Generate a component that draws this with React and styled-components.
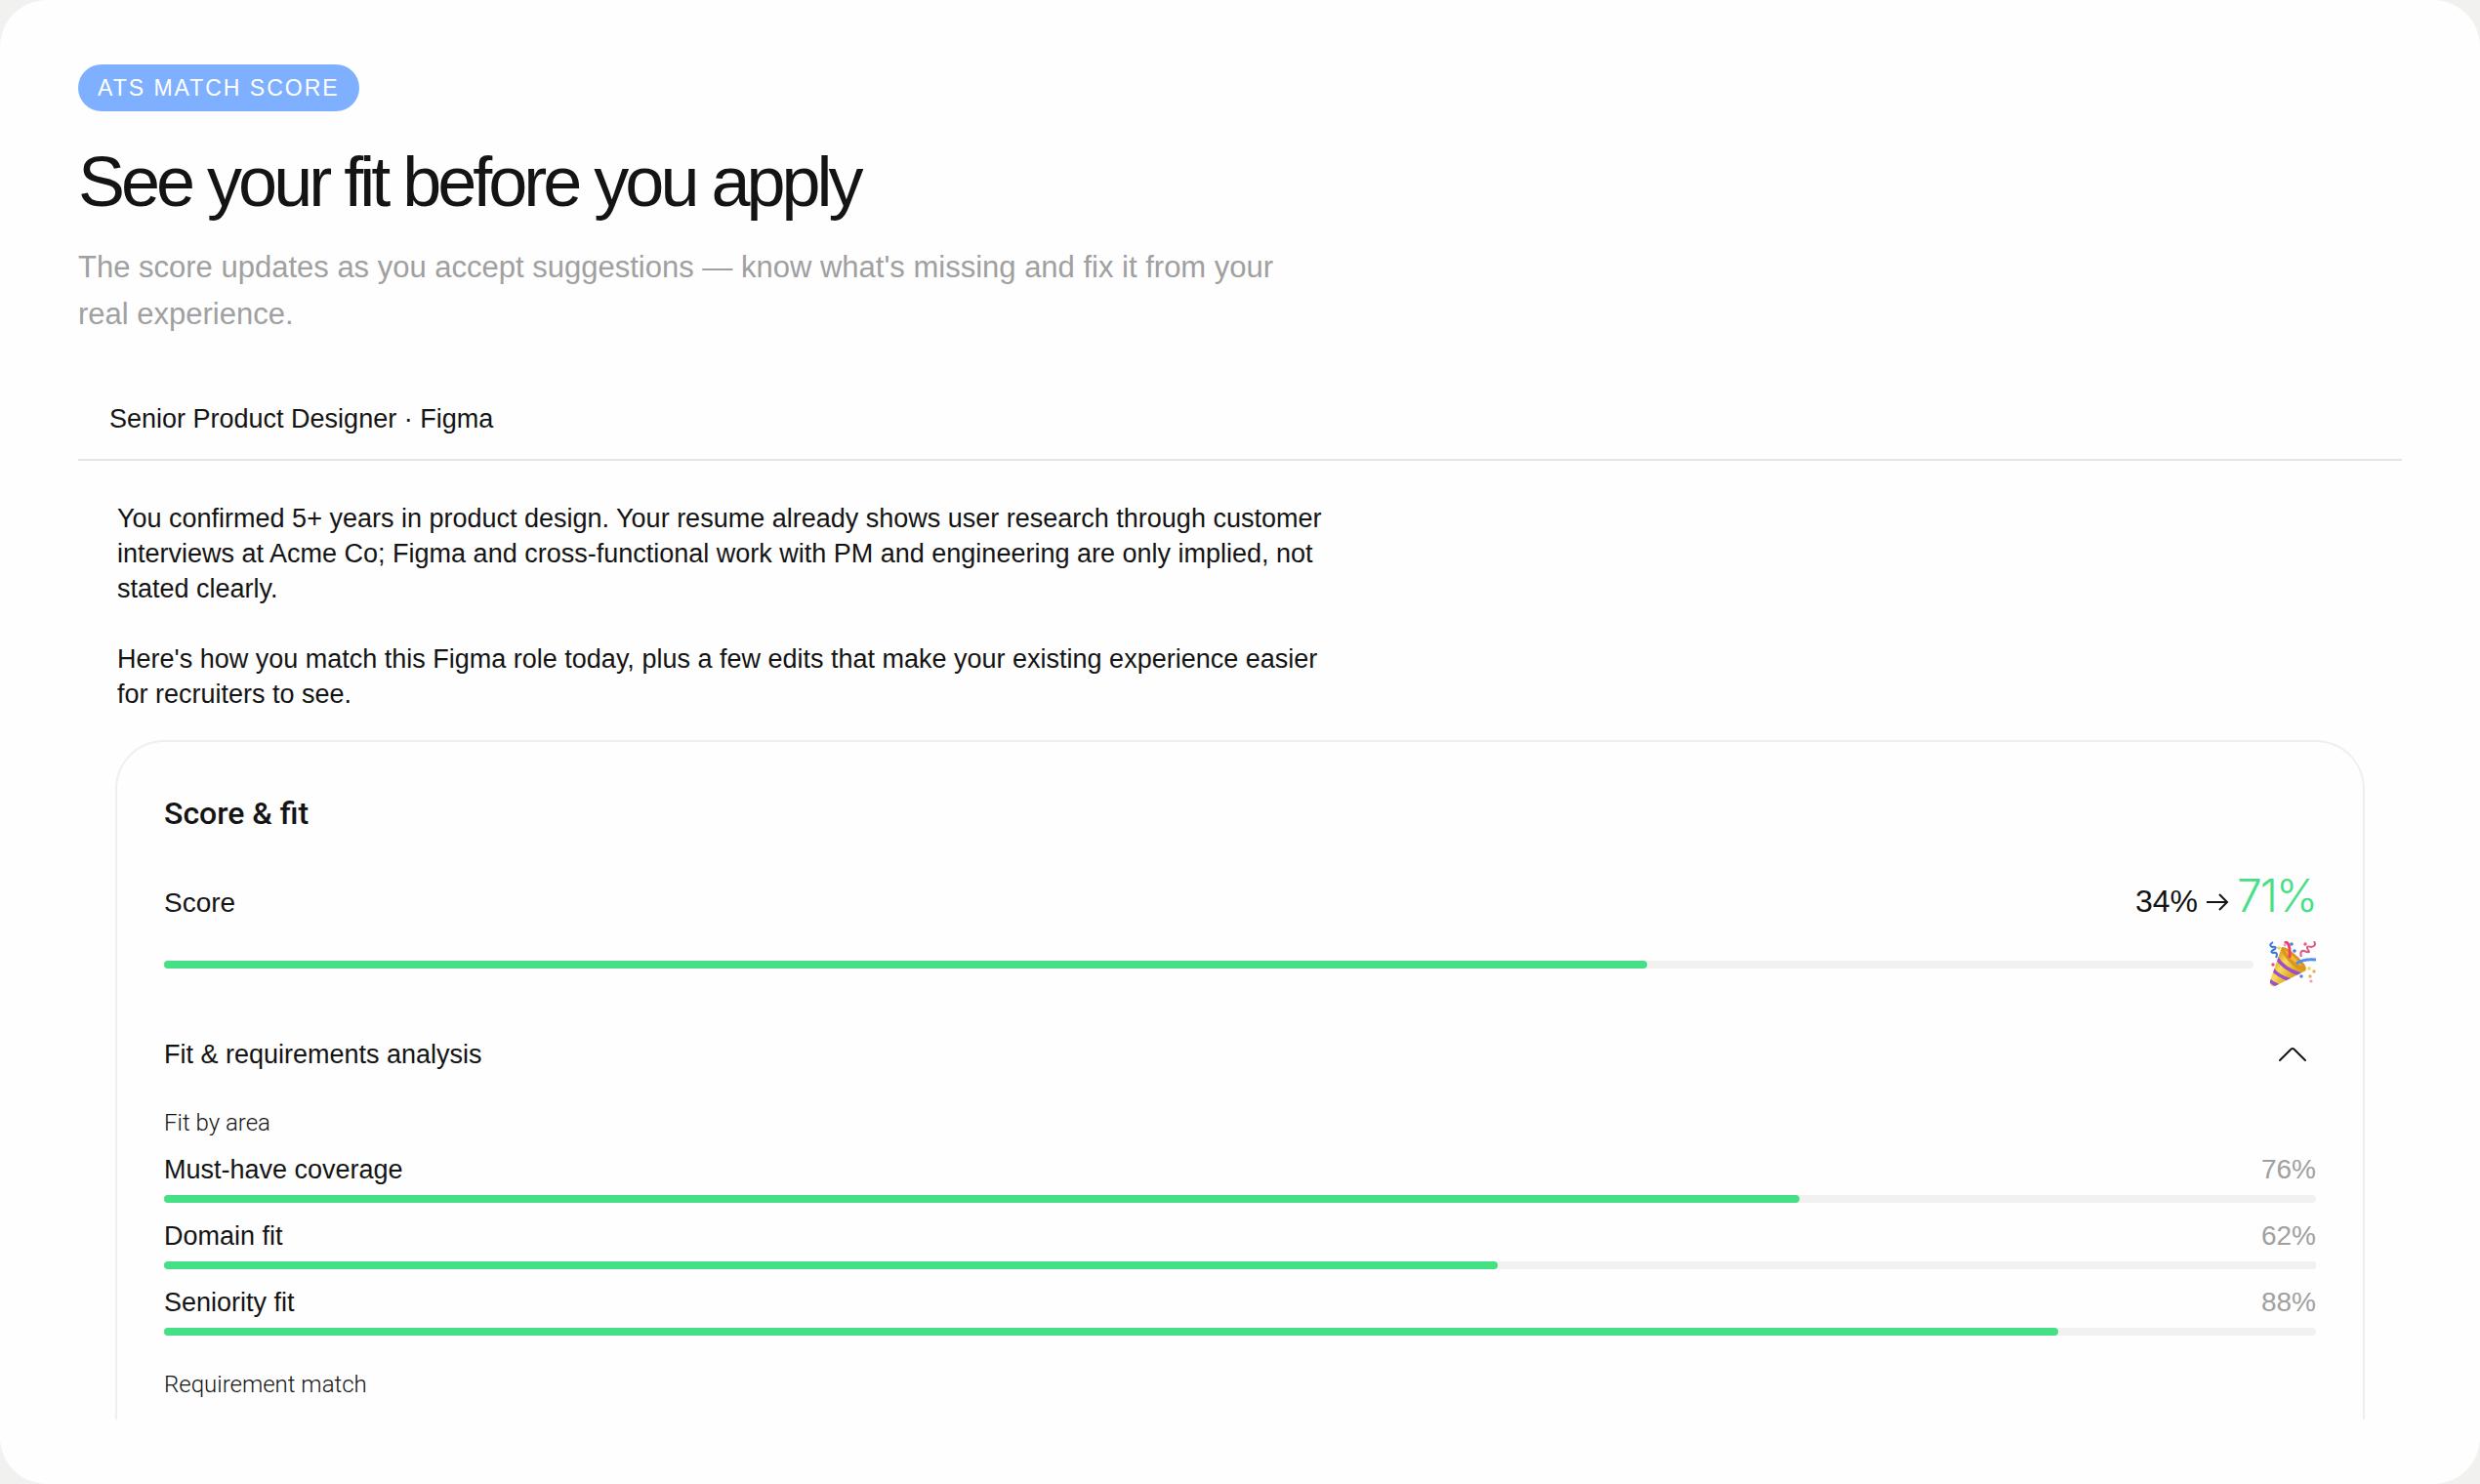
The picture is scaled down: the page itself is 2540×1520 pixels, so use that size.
import React, { useState } from "react";
import styled, { createGlobalStyle } from "styled-components";

const areas = [
	{ id: 0, title: "Must-have coverage", value: 76 },
	{ id: 1, title: "Domain fit", value: 62 },
	{ id: 2, title: "Seniority fit", value: 88 },
];

const GlobalStyle = createGlobalStyle`
	* {
		box-sizing: border-box;
		margin: 0;
		padding: 0;
	}

	body {
		background-color: #f1f1ef;
		color: #141414;
		font-family: "Liberation Sans", Arial, sans-serif;
		font-size: 27px;
		line-height: 36px;
	}
`;

function PartyPopper() {
	return (
		<svg width="48" height="48" viewBox="0 5 48 48" aria-hidden="true">
			<defs>
				<linearGradient id="cone" x1="5" y1="22" x2="26" y2="38" gradientUnits="userSpaceOnUse">
					<stop offset="0" stopColor="#d99a1c" />
					<stop offset="0.45" stopColor="#fbdc55" />
					<stop offset="1" stopColor="#d9a51f" />
				</linearGradient>
				<clipPath id="coneShape">
					<path d="M13 11 1 46Q0 52 6 51L38 35Q25 31 13 11Z" />
				</clipPath>
			</defs>
			<path d="M13 11 1 46Q0 52 6 51L38 35Q25 31 13 11Z" fill="url(#cone)" />
			<g clipPath="url(#coneShape)" fill="none" stroke="#9a4fd0" strokeWidth="3.6">
				<path d="M7 21Q15 34 32 39" />
				<path d="M3 33Q9 41 22 45" />
				<path d="M-1 44Q3 48 10 51" />
			</g>
			<path d="M13 11Q17 10 26 18Q37 27 38 33Q38 36 34 35Q22 31 15 19Q12 14 13 11Z" fill="#dc9620" />
			<path d="M16 14Q24 18 34 31Q23 27 16 14Z" fill="#f0bd35" />
			<path d="M17 6Q22 7 21 21" fill="none" stroke="#ee3e68" strokeWidth="3" strokeLinecap="round" />
			<path d="M28 28Q34 23 48 24" fill="none" stroke="#568df0" strokeWidth="3" />
			<path d="M4 6Q-1 9 3 11Q8 10 6 13Q0 16 4 17Q10 16 7 22" fill="none" stroke="#3b76dc" strokeWidth="2" />
			<path d="M46 5Q49 10 43 11Q37 9 40 14Q43 18 36 15Q31 14 33 21" fill="none" stroke="#dc5b80" strokeWidth="2" />
			<circle cx="16" cy="9" r="1.4" fill="#f29abb" />
			<circle cx="23" cy="8" r="1.8" fill="#467fe4" />
			<circle cx="26" cy="15" r="1.8" fill="#467fe4" />
			<circle cx="37" cy="8" r="1.7" fill="#e65b80" />
			<circle cx="4" cy="29" r="1.7" fill="#df4f86" />
			<circle cx="10" cy="12" r="1.8" fill="#f5d348" />
			<circle cx="41" cy="33" r="1.8" fill="#f5d348" />
			<circle cx="46" cy="36" r="1.7" fill="#eeaa65" />
			<circle cx="42" cy="41" r="1.7" fill="#eeaa65" />
			<circle cx="33" cy="41" r="1.7" fill="#467fe4" />
			<circle cx="43" cy="46" r="1.6" fill="#f59ab4" />
		</svg>
	);
}

function ProgressBar({ label, value }) {
	return (
		<Track role="progressbar" aria-label={label} aria-valuenow={value}>
			<Fill style={{ width: `${value}%` }} />
		</Track>
	);
}

function App() {
	const [open, setOpen] = useState(true);

	return (
		<>
			<GlobalStyle />
			<Panel>
				<Badge>ATS MATCH SCORE</Badge>
				<Title>See your fit before you apply</Title>
				<Subtitle>
					The score updates as you accept suggestions — know what's missing and
					fix it from your real experience.
				</Subtitle>

				<Role>Senior Product Designer · Figma</Role>

				<Preview>
					<Message>
						<p>
							You confirmed 5+ years in product design. Your resume already
							shows user research through customer interviews at Acme Co; Figma
							and cross-functional work with PM and engineering are only
							implied, not stated clearly.
						</p>
						<p>
							Here's how you match this Figma role today, plus a few edits that
							make your existing experience easier for recruiters to see.
						</p>
					</Message>

					<Card>
						<CardTitle>Score &amp; fit</CardTitle>

						<ScoreRow>
							<span>Score</span>
							<Change>
								34%
								<svg width="24" height="20" viewBox="0 0 24 20" aria-label="to">
									<path d="M1 10h21M14 2l8 8-8 8" />
								</svg>
								<strong>71%</strong>
							</Change>
						</ScoreRow>
						<ScoreBar>
							<ProgressBar label="Score" value={71} />
							<PartyPopper />
						</ScoreBar>

						<Toggle aria-expanded={open} onClick={() => setOpen(!open)}>
							Fit &amp; requirements analysis
							<Chevron $open={open} viewBox="0 0 48 36" aria-hidden="true">
								<path d="M11 24 22.6 12.6Q24 11.4 25.4 12.6L37 24" />
							</Chevron>
						</Toggle>

						{open && (
							<>
								<Caption>Fit by area</Caption>
								<Areas>
									{areas.map((area) => (
										<li key={area.id}>
											<AreaLabel>
												<span>{area.title}</span>
												<Percent>{area.value}%</Percent>
											</AreaLabel>
											<ProgressBar label={area.title} value={area.value} />
										</li>
									))}
								</Areas>
								<Caption>Requirement match</Caption>
							</>
						)}
					</Card>
				</Preview>
			</Panel>
		</>
	);
}

const Panel = styled.main`
	display: flex;
	flex-direction: column;
	min-height: 100vh;
	padding: 66px 80px;
	border-radius: 48px;
	background-color: #fefefe;
`;

const Badge = styled.span`
	align-self: flex-start;
	padding: 6px 20px;
	border-radius: 24px;
	background-color: #7fb0ff;
	color: #fff;
	font-size: 23px;
	letter-spacing: 2px;
`;

const Title = styled.h1`
	margin: 32px 0 24px;
	font-size: 72px;
	font-weight: 400;
	line-height: 80px;
	letter-spacing: -4px;
`;

const Subtitle = styled.p`
	max-width: 1260px;
	color: #a0a0a0;
	font-size: 31px;
	line-height: 48px;
`;

const Role = styled.h2`
	margin-top: 40px;
	padding: 25px 32px 23px;
	border-bottom: 2px solid #e4e4e4;
	font-size: 27px;
	font-weight: 400;
`;

const Preview = styled.section`
	display: flex;
	flex: 1;
	flex-direction: column;
	padding: 41px 38px 0;
`;

const Message = styled.div`
	display: flex;
	flex-direction: column;
	gap: 36px;
	max-width: 1260px;
	margin-bottom: 29px;
	padding-left: 2px;
`;

const Card = styled.article`
	flex: 1;
	padding: 49px 48px 20px;
	border: 2px solid #efefef;
	border-bottom: none;
	border-radius: 50px 50px 0 0;
`;

const CardTitle = styled.h3`
	font-family: Roboto, sans-serif;
	font-size: 32px;
	font-weight: 500;
	line-height: 48px;
`;

const ScoreRow = styled.div`
	display: flex;
	justify-content: space-between;
	align-items: baseline;
	margin: 32px 0 11px;
	font-size: 28px;
	line-height: 56px;
`;

const Change = styled.span`
	display: flex;
	align-items: baseline;
	gap: 8px;
	font-size: 32px;

	strong {
		color: #45e085;
		font-family: Inter, "Liberation Sans", sans-serif;
		font-size: 46px;
		font-weight: 300;
		letter-spacing: -2px;
	}

	path {
		fill: none;
		stroke: #141414;
		stroke-width: 2;
	}
`;

const ScoreBar = styled.div`
	display: flex;
	align-items: center;
	gap: 16px;
`;

const Track = styled.div`
	flex: 1;
	height: 8px;
	border-radius: 4px;
	background-color: #f1f1ef;
`;

const Fill = styled.div`
	height: 100%;
	border-radius: 4px;
	background-color: #45e085;
`;

const Toggle = styled.button`
	display: flex;
	justify-content: space-between;
	align-items: center;
	width: 100%;
	margin: 50px 0 36px;
	border: none;
	background: none;
	color: inherit;
	font: inherit;
	text-align: left;
	cursor: pointer;
`;

const Chevron = styled.svg`
	width: 48px;
	height: 36px;
	fill: none;
	stroke: #141414;
	stroke-width: 2;
	stroke-linecap: round;
	transform: ${({ $open }) => ($open ? "none" : "rotate(180deg)")};
`;

const Caption = styled.h4`
	font-family: Roboto, sans-serif;
	font-size: 24px;
	font-weight: 300;
	line-height: 32px;
`;

const Areas = styled.ul`
	display: flex;
	flex-direction: column;
	gap: 16px;
	margin: 14px 0 34px;
	list-style: none;
`;

const AreaLabel = styled.div`
	display: flex;
	justify-content: space-between;
	margin-bottom: 8px;
`;

const Percent = styled.span`
	color: #a0a0a0;
	font-size: 28px;
`;

export default App;
